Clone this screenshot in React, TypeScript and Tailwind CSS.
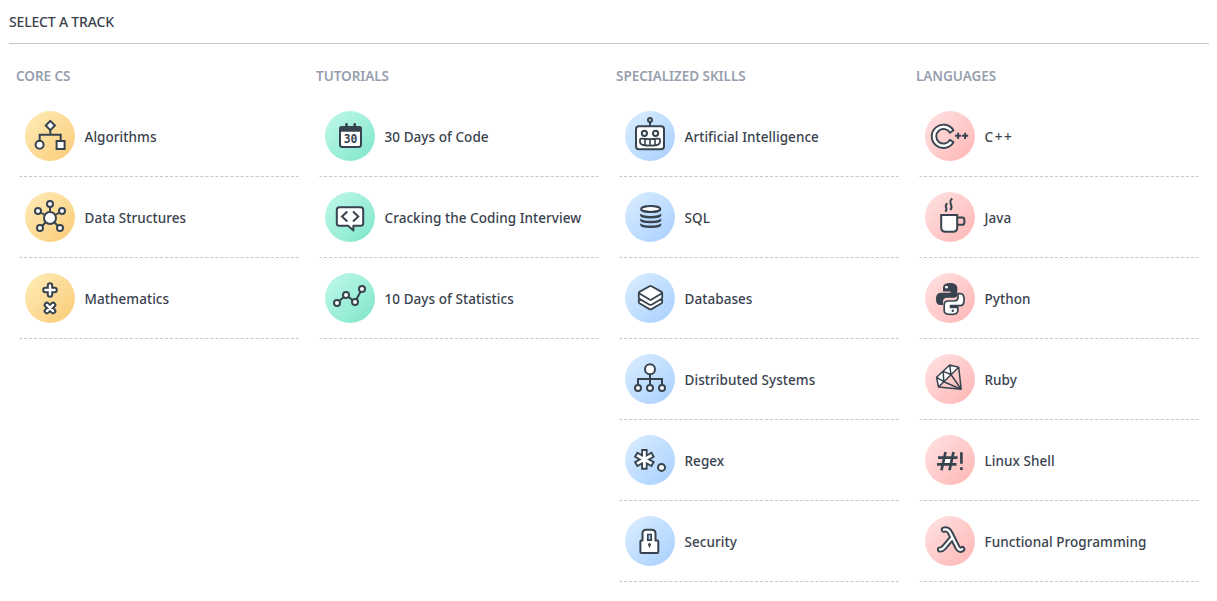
import type { ReactNode } from "react";

const INK = "#37444f";

function Ring({ x, y, r = 3 }: { x: number; y: number; r?: number }) {
  return <circle cx={x} cy={y} r={r} fill="#fff" />;
}

/* A white line with a dark outline on both sides. */
function Outlined({ d, outer, inner }: { d: string; outer: number; inner: number }) {
  return (
    <>
      <path d={d} fill="none" strokeWidth={outer} strokeLinecap="round" strokeLinejoin="round" />
      <path d={d} fill="none" stroke="#fff" strokeWidth={inner} strokeLinecap="round" strokeLinejoin="round" />
    </>
  );
}

const icons: Record<string, ReactNode> = {
  algorithms: (
    <>
      <path d="M25.3 18v5.7M14.7 29.5v-5.8h21v5.8" fill="none" />
      <path d="M25.3 9.9l4.6 4.6-4.6 4.6-4.6-4.6z" fill="#fff" />
      <Ring x={14.6} y={33.7} r={4} />
      <path d="M31.6 30h8v8h-8z" fill="#fff" />
    </>
  ),
  data: (
    <>
      <path d="M25 26V12M25 26L13 19M25 26l12-7M25 26l-10 10M25 26l10 10" fill="none" />
      <Ring x={25} y={26} r={6} />
      <Ring x={25} y={11.9} /><Ring x={13} y={19} /><Ring x={37} y={19} />
      <Ring x={15} y={35.9} /><Ring x={35} y={35.9} />
    </>
  ),
  math: (
    <>
      <Outlined d="M25 12.4v9.2M20.4 17h9.2" outer={6.4} inner={2.4} />
      <Outlined d="M21.9 31.9l6.2 6.2M28.1 31.9l-6.2 6.2" outer={6.4} inner={2.4} />
    </>
  ),
  calendar: (
    <>
      <rect x="15" y="16" width="21" height="20" rx="2.5" fill="#fff" />
      <path d="M14.200 20.800v-3.300q0-2.500 2.500-2.500h17.700q2.500 0 2.500 2.500v3.300z" fill={INK} stroke="none" />
      <path d="M21.500 13.200V17M29.700 13.200V17" strokeWidth="2.600" strokeLinecap="round" />
      <text x="25.600" y="32.200" textAnchor="middle" fill={INK} stroke="none" fontFamily="DejaVu Sans Mono, monospace" fontWeight="bold" fontSize="11.400">30</text>
    </>
  ),
  interview: (
    <>
      <path d="M14.300 15.200h21.400q2.500 0 2.500 2.500v13.600q0 2.500-2.500 2.500h-7.300v4.600l-5.300-4.600h-8.800q-2.500 0-2.500-2.500V17.700q0-2.500 2.500-2.500z" fill="#fff" strokeLinejoin="round" />
      <path d="M22.300 19.500l-5.300 5 5.300 5M28 19.500l5.300 5-5.300 5" fill="none" />
    </>
  ),
  statistics: (
    <>
      <path d="M12 30l9-8 9 7 7-13" fill="none" />
      <Ring x={12} y={30} /><Ring x={21} y={22} /><Ring x={30} y={29} /><Ring x={37} y={16} />
    </>
  ),
  robot: (
    <>
      <path d="M25 11v4" />
      <circle cx="25" cy="9" r="2" fill="none" />
      <rect x="11" y="15.200" width="28" height="23" rx="3" fill="#fff" />
      <circle cx="19.400" cy="22.300" r="2.600" fill="#fff" />
      <circle cx="30.600" cy="22.300" r="2.600" fill="#fff" />
      <path d="M15 29q0-1.600 2-1.400 8 1 16 0 2-.2 2 1.400v1.700q0 2.300-3 3.300-7 1.400-14 0-3-1-3-3.300z" fill="#fff" strokeWidth="1.800" />
      <path d="M20 28v6M25 28v7M30 28v6" strokeWidth="1.600" />
    </>
  ),
  sql: (
    <>
      <ellipse cx="25.700" cy="17" rx="9.600" ry="2.900" fill="#fff" />
      <g fill={INK} stroke="none">
        <path d="M15.100 17q0 4 10.600 4t10.600-4q-1 2.200-10.600 2.200T15.100 17z" />
        <path d="M15.100 21.600q2.500 2.400 10.600 2.400t10.600-2.400v1.600q0 3.200-10.600 3.200t-10.600-3.200z" />
        <path d="M15.100 26.400q2.500 2.400 10.600 2.400t10.600-2.400V28q0 3.200-10.600 3.200T15.100 28z" />
        <path d="M15.100 31.200q2.500 2.400 10.600 2.400t10.600-2.400v1.600q0 3.200-10.600 3.200t-10.600-3.200z" />
      </g>
    </>
  ),
  databases: (
    <g fill="#fff" strokeLinejoin="round" strokeWidth="1.800">
      <path d="M13.800 27v2.200q0 .6.600 1l10.100 5.900q1 .5 2 0l10.100-5.900q.6-.4.600-1V27z" />
      <path d="M13.800 20v4.800q0 .6.600 1l10.100 5.900q1 .5 2 0l10.100-5.900q.6-.4.600-1V20z" />
      <path d="M24.500 13.200q1-.5 2 0l10.100 5.700q1.100.8 0 1.700l-10.100 6q-1 .5-2 0l-10.100-6q-1.100-.9 0-1.700z" />
    </g>
  ),
  distributed: (
    <>
      <path d="M25 19v13M13 32v-7h24v7" fill="none" />
      <Ring x={25} y={15.2} r={5} />
      <Ring x={13} y={34} /><Ring x={25} y={34} /><Ring x={37} y={34} />
    </>
  ),
  regex: (
    <>
      <g strokeWidth="6.400"><path d="M19.400 14v20.800M10.400 19.200l18 10.400M10.400 29.600l18-10.400" /></g>
      <g strokeWidth="2.800" stroke="#fff"><path d="M19.400 16v16.800M12.100 20.200l14.600 8.400M12.100 28.600l14.600-8.400" /></g>
      <Ring x={36.500} y={32.400} r={3.500} />
    </>
  ),
  lock: (
    <>
      <path d="M15.400 36V25.500q0-1 1-1h1.100v-7q0-3.800 3.800-3.800h5.400q3.800 0 3.800 3.800v7h1.800q1 0 1 1V36q0 1-1 1H16.400q-1 0-1-1z" fill="#fff" strokeLinejoin="round" />
      <path d="M22.800 18.500h3.400v5.700h-3.400z" fill="#c4deff" strokeWidth="1.700" />
      <circle cx="24.500" cy="28.600" r="1.500" fill={INK} stroke="none" />
      <path d="M24.500 28.500v3" strokeWidth="1.400" />
    </>
  ),
  cpp: (
    <>
      <path d="M28.500 19.300a11.700 11.700 0 1 0 0 12l-3.600-2.400a7.300 7.300 0 1 1 0-7.200z" fill="#fff" strokeWidth="1.900" strokeLinejoin="round" />
      <path d="M30 24.800h6.200M33.100 21.700v6.200M37 24.800h6.200M40.100 21.700v6.200" strokeWidth="2" />
    </>
  ),
  java: (
    <>
      <path d="M32 25.500h5q2.400 0 2.400 2.400v2.500q0 2.400-2.400 2.400h-5" fill="none" />
      <path d="M16.200 23h16v12.500q0 4.300-4.300 4.300h-7.400q-4.300 0-4.300-4.300z" fill="#fff" />
      <path d="M22.300 11.200c-4.500 3.800 1.800 4.300-2 8.500M27.300 6.500c-5.500 4.500 2.300 6.300-2 11.500" fill="none" strokeWidth="2" />
    </>
  ),
  python: (
    <>
      <path d="M18 14.500q0-4.500 7-4.500t7.300 4.500v6.700q0 3.600-3.800 3.600h-6.500q-4 0-4 4v3.300h-2.800Q11 32.100 11 26t4.500-6.300h10v-1.200H18z" fill={INK} stroke="none" />
      <circle cx="21.500" cy="14.200" r="1.400" fill="#fff" stroke="none" />
      <path d="M32.800 38q0 3.400-6.800 3.400t-6.800-3.400v-6.300q0-3.700 4-3.700h5.800q4 0 4-4v-3.300h2.500q3.600 0 3.600 6T35 32.700h-9.500v1.600h7.300z" fill="#fff" strokeWidth="1.700" strokeLinejoin="round" />
      <circle cx="27.800" cy="37.800" r="1.200" fill={INK} stroke="none" />
    </>
  ),
  ruby: (
    <g strokeWidth="1.500" strokeLinejoin="round">
      <path d="M11.600 23.300L24.700 11l9 2.300L14 32z" fill="#fff" stroke="none" />
      <path d="M11.600 23.300L24.700 11l9 2.300 2.500 21.900-22.700-2.200zM33.700 13.300L13.500 33M36.200 35.200L18.800 27.700M36.200 35.200L25.900 20.500M11.600 23.300l7.200 4.400-.6-10.300 7.700 3.100L24.700 11" fill="none" />
    </g>
  ),
  shell: (
    <>
      <path d="M19.200 22.500h7.300l-1.400 6.500h-7.300z" fill="#fff" stroke="none" />
      <path d="M13 22.700h19.500M12 29.300h19.500M20.500 17l-4 18.300M28.500 17l-4 18.300" strokeWidth="2.700" />
      <path d="M36.400 17.200v11.500M36.400 32.300v2.800" strokeWidth="2.700" />
    </>
  ),
  lambda: (
    <Outlined d="M15 33.500q2.200.1 3.700-1.800l7.900-9.200M18.900 13.700c3.400-1 5 .3 6.700 4l6.700 13.400c1.500 2.800 3 3.300 4.900 2" outer={6.2} inner={2.3} />
  ),
};

const columns = [
  { title: "CORE CS", tint: "from-[#ffecb8] to-[#facb76]", items: [["algorithms", "Algorithms"], ["data", "Data Structures"], ["math", "Mathematics"]] },
  { title: "TUTORIALS", tint: "from-[#c0f8eb] to-[#7ce6c9]", items: [["calendar", "30 Days of Code"], ["interview", "Cracking the Coding Interview"], ["statistics", "10 Days of Statistics"]] },
  { title: "SPECIALIZED SKILLS", tint: "from-[#dbeeff] to-[#a8cfff]", items: [["robot", "Artificial Intelligence"], ["sql", "SQL"], ["databases", "Databases"], ["distributed", "Distributed Systems"], ["regex", "Regex"], ["lock", "Security"]] },
  { title: "LANGUAGES", tint: "from-[#ffe3e3] to-[#ffb5b5]", items: [["cpp", "C++"], ["java", "Java"], ["python", "Python"], ["ruby", "Ruby"], ["shell", "Linux Shell"], ["lambda", "Functional Programming"]] },
];

export default function App() {
  return (
    <main className="min-h-[601px] bg-white pl-[9px] font-['Noto_Sans',sans-serif] text-[#39424e]">
      <div className="w-[1200px]">
        <h1 className="h-11 border-b border-[#c2c7d0] pt-[12px] text-[14px] leading-5 font-medium tracking-[-0.18px]">SELECT A TRACK</h1>
        <div className="grid grid-cols-4">
          {columns.map((col) => (
            <section key={col.title} className="px-[10px]">
              <h2 className="-ml-[3px] h-[52px] pt-[22px] text-[13.5px] leading-5 font-semibold tracking-[-0.04px] text-[#979faf]">{col.title}</h2>
              <ul>
                {col.items.map(([icon, label]) => (
                  <li key={icon} className="flex h-[81px] items-start gap-[9.5px] border border-dashed border-transparent border-b-[#c2c7d0] pt-[14px] pl-[5px]">
                    <span className={`size-[50px] shrink-0 rounded-full bg-linear-to-br ${col.tint}`}>
                      <svg viewBox="0 0 50 50" className="size-[50px]" stroke={INK} strokeWidth="2">{icons[icon]}</svg>
                    </span>
                    <span className={`pt-4 text-[13.5px] leading-5 font-medium whitespace-nowrap ${icon === "cpp" ? "tracking-[1.6px]" : "tracking-[0.06px]"}`}>{label}</span>
                  </li>
                ))}
              </ul>
            </section>
          ))}
        </div>
      </div>
    </main>
  );
}
